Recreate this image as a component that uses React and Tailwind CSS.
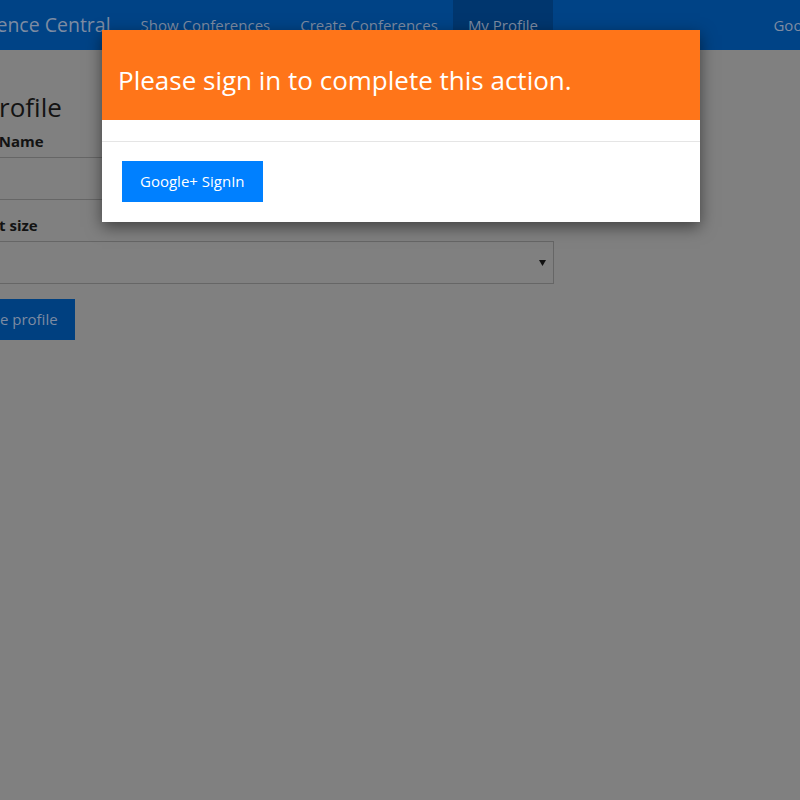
const NAV_ITEMS = [
  { label: "Show Conferences", active: false },
  { label: "Create Conferences", active: false },
  { label: "My Profile", active: true },
];

const Navbar = () => (
  <nav className="flex h-[50px] items-stretch bg-[#004386] text-[15px] text-[#7d8ba2]">
    <div className="ml-[-65px] flex items-center pr-[15px] text-[19.5px] whitespace-nowrap">
      Conference Central
    </div>
    <ul className="flex items-stretch">
      {NAV_ITEMS.map((item) => (
        <li
          key={item.label}
          className={`flex items-center px-[15px] whitespace-nowrap ${item.active ? "bg-[#00366e]" : ""}`}
        >
          {item.label}
        </li>
      ))}
    </ul>
    <div className="ml-auto flex items-center pl-[15px] whitespace-nowrap">
      <span className="mr-[-78px]">Google+ SignIn</span>
    </div>
  </nav>
);

const ProfileForm = () => (
  <div className="ml-[-60px] w-[614px] pt-[40px] text-[#131313]">
    <h1 className="text-[26px] leading-[34px]">My profile</h1>
    <div className="mt-[7px]">
      <label className="block text-[15px] font-bold leading-[20px]">Display Name</label>
      <div className="mt-[6px] h-[43px] w-full border border-[#666666] bg-[#808080]" />
    </div>
    <div className="mt-[15px]">
      <label className="block text-[15px] font-bold leading-[20px]">Tee shirt size</label>
      <div className="mt-[6px] flex h-[43px] w-full items-center justify-end border border-[#666666] bg-[#808080] pr-[7px]">
        <svg width="7" height="6" viewBox="0 0 7 6">
          <path d="M0 0h7L3.5 6z" fill="#111111" />
        </svg>
      </div>
    </div>
    <button className="mt-[15px] h-[41px] bg-[#004080] px-[17px] text-[15px] text-[#7d8ba2]">
      Update profile
    </button>
  </div>
);

const SignInModal = () => (
  <div className="absolute left-[102px] top-[30px] w-[598px] bg-white shadow-[0_5px_15px_rgba(0,0,0,0.5)]">
    <div className="flex h-[90px] items-center bg-[#ff7519] px-[16px] pt-[10px]">
      <h4 className="text-[26px] leading-[34px] text-white">Please sign in to complete this action.</h4>
    </div>
    <div className="h-[21px]" />
    <div className="border-t border-[#e5e5e5] px-[20px] pt-[19px] pb-[20px]">
      <button className="h-[41px] bg-[#0080ff] px-[18px] text-[15px] text-white">Google+ SignIn</button>
    </div>
  </div>
);

export default function App() {
  return (
    <div
      className="relative h-[800px] w-[800px] overflow-hidden bg-[#808080]"
      style={{ fontFamily: '"Open Sans", "Noto Sans", sans-serif' }}
    >
      <Navbar />
      <ProfileForm />
      <SignInModal />
    </div>
  );
}
